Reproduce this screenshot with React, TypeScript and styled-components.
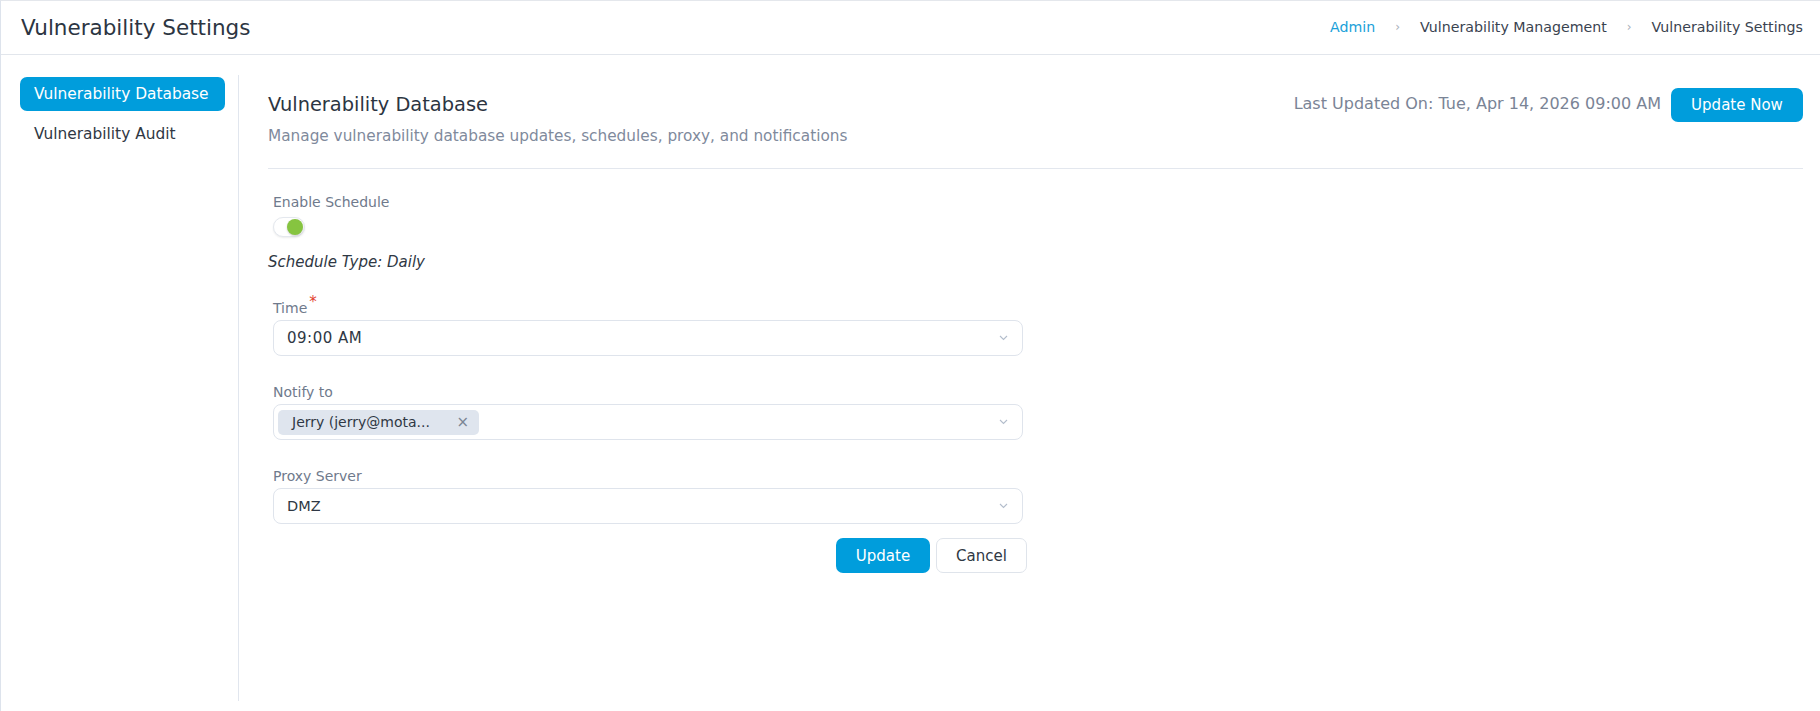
import React from "react";
import styled, { createGlobalStyle } from "styled-components";

const GlobalStyle = createGlobalStyle`
  html, body {
    margin: 0;
    padding: 0;
    background: #ffffff;
    font-family: "DejaVu Sans", "Open Sans", sans-serif;
    color: #2c3542;
  }
  * {
    box-sizing: border-box;
  }
`;

const Page = styled.div`
  height: 711px;
  border-top: 1px solid #e4e7ec;
  border-left: 1px solid #dde3ec;
  display: flex;
  flex-direction: column;
`;

const Header = styled.div`
  height: 54px;
  flex-shrink: 0;
  display: flex;
  align-items: center;
  justify-content: space-between;
  padding: 0 17px 0 20px;
  border-bottom: 1px solid #e2e6ec;
`;

const PageTitle = styled.h1`
  margin: 0;
  font-size: 21.5px;
  font-weight: normal;
  color: #2c3542;
`;

const Crumbs = styled.nav`
  display: flex;
  align-items: center;
  gap: 14px;
  font-size: 14.2px;
  margin-top: -2px;
`;

const Crumb = styled.span<{ $link?: boolean }>`
  color: ${(p) => (p.$link ? "#1a9fd9" : "#3a4350")};
`;

const CrumbSep = styled.span`
  color: #a8afba;
  font-size: 12px;
  padding: 0 6px;
`;

const Body = styled.div`
  flex: 1;
  display: flex;
  padding: 20px 17px 10px 0;
`;

const Sidebar = styled.aside`
  width: 238px;
  flex-shrink: 0;
  padding: 2px 13px 0 19px;
  border-right: 1px solid #e1e6ee;
  display: flex;
  flex-direction: column;
  gap: 6px;
`;

const SideItem = styled.div<{ $active?: boolean }>`
  height: 34px;
  display: flex;
  align-items: center;
  padding: 0 14px;
  border-radius: 7px;
  font-size: 15.4px;
  color: ${(p) => (p.$active ? "#ffffff" : "#2f3844")};
  background: ${(p) => (p.$active ? "#009ddc" : "transparent")};
`;

const Content = styled.main`
  flex: 1;
  padding-left: 29px;
  display: flex;
  flex-direction: column;
`;

const TopRow = styled.div`
  display: flex;
  justify-content: space-between;
  align-items: flex-start;
  padding-top: 18px;
  padding-bottom: 22px;
  border-bottom: 1px solid #e3e7ee;
`;

const Titles = styled.div`
  display: flex;
  flex-direction: column;
  gap: 9px;
`;

const SectionTitle = styled.h2`
  margin: 0;
  font-size: 19.4px;
  line-height: 24px;
  font-weight: normal;
  color: #2c3542;
`;

const SectionSub = styled.p`
  margin: 0;
  font-size: 15.3px;
  line-height: 20px;
  color: #7f8a9c;
`;

const TopActions = styled.div`
  display: flex;
  align-items: center;
  gap: 10px;
  margin-top: -5px;
`;

const LastUpdated = styled.span`
  font-size: 16px;
  color: #7a8496;
  margin-top: -4px;
`;

const PrimaryButton = styled.button<{ $w: number; $h: number }>`
  width: ${(p) => p.$w}px;
  height: ${(p) => p.$h}px;
  border: none;
  border-radius: 7px;
  background: #009ddc;
  color: #ffffff;
  font-family: inherit;
  font-size: 15px;
  cursor: pointer;
  padding: 0;
`;

const GhostButton = styled.button`
  width: 91px;
  height: 35px;
  border: 1px solid #dfe4eb;
  border-radius: 7px;
  background: #ffffff;
  color: #2f3844;
  font-family: inherit;
  font-size: 15px;
  cursor: pointer;
  padding: 0;
`;

const Form = styled.div`
  width: 759px;
  padding-top: 24px;
  display: flex;
  flex-direction: column;
`;

const Indented = styled.div`
  padding-left: 5px;
  display: flex;
  flex-direction: column;
`;

const Label = styled.label`
  font-size: 14px;
  color: #6f7a8c;
  line-height: 18px;
`;

const Required = styled.sup`
  color: #e2412e;
  font-size: 15px;
  margin-left: 2px;
  line-height: 0;
`;

const Toggle = styled.div`
  margin-top: 6px;
  width: 32px;
  height: 20px;
  border-radius: 10px;
  border: 1px solid #e4e8ee;
  background: #ffffff;
  box-shadow: 0 1px 2px rgba(0, 0, 0, 0.08);
  display: flex;
  align-items: center;
  justify-content: flex-end;
  padding: 0 1px;
`;

const Knob = styled.span`
  width: 16px;
  height: 16px;
  border-radius: 50%;
  background: #86c440;
  box-shadow: 0 1px 2px rgba(0, 0, 0, 0.2);
`;

const ScheduleType = styled.div`
  margin-top: 15px;
  font-size: 15px;
  line-height: 20px;
  font-style: italic;
  color: #2f3844;
`;

const Field = styled.div<{ $top: number }>`
  margin-top: ${(p) => p.$top}px;
  display: flex;
  flex-direction: column;
  gap: 3px;
  width: 750px;
`;

const Select = styled.div`
  height: 36px;
  border: 1px solid #dfe4ec;
  border-radius: 8px;
  display: flex;
  align-items: center;
  justify-content: space-between;
  padding: 0 14px 0 13px;
  font-size: 14.5px;
  color: #2f3844;
`;

const TimeValue = styled.span`
  font-size: 15px;
  letter-spacing: 0.5px;
`;

const ChipSelect = styled(Select)`
  padding-left: 4px;
`;

const Chip = styled.span`
  height: 25px;
  width: 201px;
  border-radius: 5px;
  background: #dfe5ee;
  display: flex;
  align-items: center;
  justify-content: space-between;
  padding: 0 10px 0 14px;
  font-size: 14px;
  color: #2f3844;
`;

const ChipClose = styled.span`
  color: #7b8595;
  font-size: 15px;
`;

const Actions = styled.div`
  width: 759px;
  margin-top: 14px;
  display: flex;
  justify-content: flex-end;
  gap: 6px;
`;

const Chevron = () => (
  <svg width="9" height="6" viewBox="0 0 9 6" fill="none">
    <path d="M1 1l3.5 3.5L8 1" stroke="#b3bdcc" strokeWidth="1.1" />
  </svg>
);

export default function App() {
  return (
    <>
      <GlobalStyle />
      <Page>
        <Header>
          <PageTitle>Vulnerability Settings</PageTitle>
          <Crumbs>
            <Crumb $link>Admin</Crumb>
            <CrumbSep>›</CrumbSep>
            <Crumb>Vulnerability Management</Crumb>
            <CrumbSep>›</CrumbSep>
            <Crumb>Vulnerability Settings</Crumb>
          </Crumbs>
        </Header>
        <Body>
          <Sidebar>
            <SideItem $active>Vulnerability Database</SideItem>
            <SideItem>Vulnerability Audit</SideItem>
          </Sidebar>
          <Content>
            <TopRow>
              <Titles>
                <SectionTitle>Vulnerability Database</SectionTitle>
                <SectionSub>
                  Manage vulnerability database updates, schedules, proxy, and notifications
                </SectionSub>
              </Titles>
              <TopActions>
                <LastUpdated>Last Updated On: Tue, Apr 14, 2026 09:00 AM</LastUpdated>
                <PrimaryButton $w={132} $h={34}>Update Now</PrimaryButton>
              </TopActions>
            </TopRow>
            <Form>
              <Indented>
                <Label>Enable Schedule</Label>
                <Toggle>
                  <Knob />
                </Toggle>
              </Indented>
              <ScheduleType>Schedule Type: Daily</ScheduleType>
              <Indented>
                <Field $top={27}>
                  <Label>
                    Time<Required>*</Required>
                  </Label>
                  <Select>
                    <TimeValue>09:00 AM</TimeValue>
                    <Chevron />
                  </Select>
                </Field>
                <Field $top={27}>
                  <Label>Notify to</Label>
                  <ChipSelect>
                    <Chip>
                      <span>Jerry (jerry@mota...</span>
                      <ChipClose>×</ChipClose>
                    </Chip>
                    <Chevron />
                  </ChipSelect>
                </Field>
                <Field $top={27}>
                  <Label>Proxy Server</Label>
                  <Select>
                    <span>DMZ</span>
                    <Chevron />
                  </Select>
                </Field>
              </Indented>
              <Actions>
                <PrimaryButton $w={94} $h={35}>Update</PrimaryButton>
                <GhostButton>Cancel</GhostButton>
              </Actions>
            </Form>
          </Content>
        </Body>
      </Page>
    </>
  );
}
